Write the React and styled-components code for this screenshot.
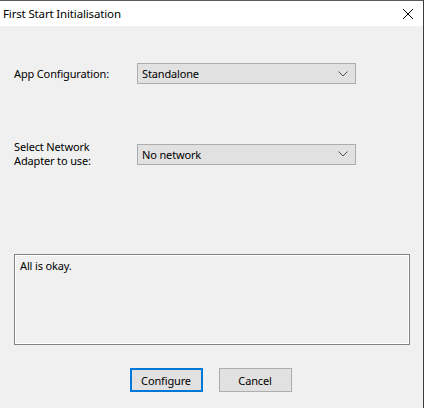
import React from "react";
import styled, { createGlobalStyle } from "styled-components";

const GlobalStyle = createGlobalStyle`
  *, *::before, *::after { box-sizing: border-box; margin: 0; padding: 0; }
  html, body { width: 424px; height: 408px; overflow: hidden; }
  body {
    font-family: "Noto Sans", "Open Sans", "Liberation Sans", sans-serif;
    font-size: 11px;
    letter-spacing: -0.15px;
    color: #000;
    background: #f0f0f0;
  }
`;

const Window = styled.div`
  width: 424px;
  height: 408px;
  display: flex;
  flex-direction: column;
  background: #f0f0f0;
  border-right: 1px solid #3c3c3c;
`;

const TitleBar = styled.div`
  height: 26px;
  flex: 0 0 26px;
  background: #fff;
  display: flex;
  align-items: center;
  justify-content: space-between;
  padding: 0 10px 0 3px;
  border-top: 1px solid #5a5a5a;
`;

const Title = styled.span`
  font-size: 11.5px;
`;

const Body = styled.div`
  flex: 1;
  display: flex;
  flex-direction: column;
  padding: 37px 13px 0 14px;
`;

const Row = styled.div`
  display: grid;
  grid-template-columns: 123px 219px;
  align-items: center;
  margin-bottom: ${(p) => p.$gap || 0}px;
`;

const Label = styled.label`
  line-height: 14px;
`;

const Combo = styled.div`
  height: 21px;
  background: #e1e1e1;
  border: 1px solid #adadad;
  display: flex;
  align-items: center;
  justify-content: space-between;
  padding: 0 7px 0 4px;
`;

const StatusBox = styled.div`
  height: 91px;
  width: 396px;
  border: 1px solid #828282;
  box-shadow: inset 0 0 0 1px #ffffff;
  padding: 3px 5px;
  line-height: 15px;
`;

const Buttons = styled.div`
  display: flex;
  justify-content: center;
  gap: 16px;
  margin-top: 23px;
  padding-right: 3px;
`;

const Button = styled.button`
  width: 73px;
  height: 24px;
  font-family: inherit;
  font-size: 11px;
  letter-spacing: -0.15px;
  color: #000;
  background: #e1e1e1;
  border: ${(p) => (p.$default ? "2px solid #0078d7" : "1px solid #adadad")};
`;

const Chevron = () => (
  <svg width="10" height="6" viewBox="0 0 10 6">
    <path d="M0.5 0.5 L5 5 L9.5 0.5" fill="none" stroke="#555" strokeWidth="1" />
  </svg>
);

const CloseIcon = () => (
  <svg width="10" height="10" viewBox="0 0 10 10">
    <path d="M0 0 L10 10 M10 0 L0 10" stroke="#000" strokeWidth="1" />
  </svg>
);

function App() {
  return (
    <Window>
      <GlobalStyle />
      <TitleBar>
        <Title>First Start Initialisation</Title>
        <CloseIcon />
      </TitleBar>
      <Body>
        <Row $gap={56}>
          <Label>App Configuration:</Label>
          <Combo>
            <span>Standalone</span>
            <Chevron />
          </Combo>
        </Row>
        <Row $gap={86}>
          <Label>
            Select Network
            <br />
            Adapter to use:
          </Label>
          <Combo>
            <span>No network</span>
            <Chevron />
          </Combo>
        </Row>
        <StatusBox>All is okay.</StatusBox>
        <Buttons>
          <Button $default>Configure</Button>
          <Button>Cancel</Button>
        </Buttons>
      </Body>
    </Window>
  );
}

export default App;
